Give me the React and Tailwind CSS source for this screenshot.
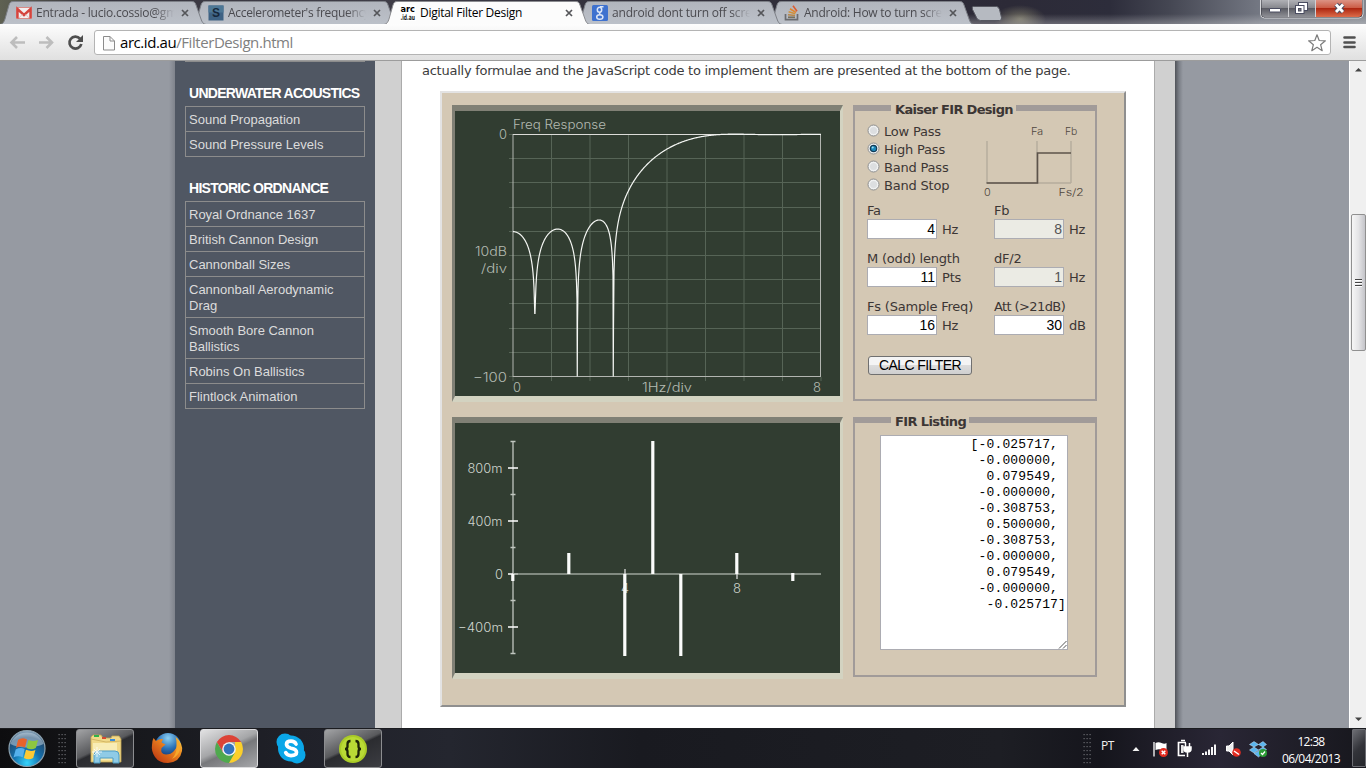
import React from "react";

const UI = "font-['Open_Sans','Noto_Sans',sans-serif]";

const TAB = "M0 24.5 C3 24 4 22 5 19 L9 5 C10 2 11 1.5 14 1.5 H191 C194 1.5 195 2 196 5 L201 19 C202 22 203 24 206 24.5";

function Tab({ icon, title, active, spacing }) {
  return (
    <div className="flex h-6 w-48 shrink-0 items-center pt-0.5 pl-4">
      <div className="h-4 w-4 shrink-0">{icon}</div>
      <div
        className={`ml-1 w-[138px] shrink-0 overflow-hidden text-[12px] leading-4 whitespace-nowrap ${spacing} ${
          active ? "text-black" : "text-[#4b4b50] [mask-image:linear-gradient(90deg,black_86%,transparent)]"
        }`}
      >
        {title}
      </div>
      <svg className="ml-[7px] shrink-0" width="8" height="8" viewBox="0 0 8 8">
        <path d="M1 1 7 7M7 1 1 7" stroke="#55565a" strokeWidth="1.7" />
      </svg>
    </div>
  );
}

const Gmail = (
  <svg width="16" height="16" viewBox="0 0 16 16">
    <rect x="0.5" y="2.5" width="15" height="11" rx="1" fill="#f3eeee" stroke="#d98a86" />
    <path d="M1.5 13.5V4L8 10l6.500-6V13.500" fill="none" stroke="#d5443d" strokeWidth="2.400" />
    <path d="M3 13 6.500 9M13 13 9.500 9" stroke="#ddb9b7" strokeWidth="0.800" />
  </svg>
);
const SBlue = (
  <svg width="16" height="16" viewBox="0 0 16 16">
    <rect width="15" height="15" x="0.500" y="0.500" fill="#3e6284" />
    <rect width="15" height="7" x="0.500" y="0.500" fill="#4d7795" />
    <text x="8" y="12" textAnchor="middle" fontSize="12" fontWeight="700" fontFamily="Liberation Sans, sans-serif" fill="#16283c">S</text>
  </svg>
);
const Arc = (
  <svg width="16" height="16" viewBox="0 0 16 16">
    <rect width="16" height="16" fill="#fff" />
    <text x="0.500" y="7" fontSize="9" fontWeight="700" textLength="14.500" lengthAdjust="spacingAndGlyphs" fontFamily="DejaVu Sans, sans-serif" fill="#000">arc</text>
    <text x="0.500" y="15" fontSize="7.500" fontWeight="700" textLength="14.500" lengthAdjust="spacingAndGlyphs" fontFamily="DejaVu Sans, sans-serif" fill="#222">.id.au</text>
  </svg>
);
const Google = (
  <svg width="16" height="16" viewBox="0 0 16 16">
    <rect width="16" height="16" rx="1.500" fill="#3f72cf" />
    <g fill="none" stroke="#dce6f7" strokeWidth="1.500">
      <ellipse cx="7.500" cy="4.800" rx="2.200" ry="2.500" />
      <path d="M8 1.800h3.500M8.500 7.200c-1.500 1-1 1.700 0 2.300" />
      <ellipse cx="7.800" cy="12" rx="3.100" ry="2.300" />
    </g>
  </svg>
);
const Stack = (
  <svg width="16" height="16" viewBox="0 0 16 16">
    <path d="M1.500 9v5.700h12V9" fill="none" stroke="#6b6c70" strokeWidth="1.700" />
    <path d="M4 12.300h7" stroke="#77705f" strokeWidth="1.700" />
    <path d="M4 9.700l7 .8" stroke="#b9874a" strokeWidth="1.600" />
    <path d="M4.600 6.800l6.700 2" stroke="#d0903a" strokeWidth="1.600" />
    <path d="M6 3.800l6 3.700" stroke="#df8630" strokeWidth="1.600" />
    <path d="M9 .8l4 5.500" stroke="#dc5c30" strokeWidth="1.600" />
  </svg>
);

function TabStrip() {
  return (
    <div className="relative h-6 w-full overflow-hidden bg-[linear-gradient(90deg,#5f6152_0px,#37353f_90px,#3f3d47_380px,#33313c_620px,#2c2a37_1010px,#2d2d3b_1110px,#454753_1170px,#747883_1260px,#82868e_1366px)]">
      <svg className="absolute inset-0" width="1366" height="25">
        <defs>
          <linearGradient id="tabg" x1="0" y1="0" x2="0" y2="1">
            <stop offset="0" stopColor="#b1b5bd" />
            <stop offset="1" stopColor="#bcc1c9" />
          </linearGradient>
          <linearGradient id="band" x1="0" y1="0" x2="0" y2="1">
            <stop offset="0" stopColor="#fff" stopOpacity="0" />
            <stop offset="1" stopColor="#fff" stopOpacity="0.280" />
          </linearGradient>
          <radialGradient id="olive">
            <stop offset="0" stopColor="#85826e" stopOpacity="0.800" />
            <stop offset="1" stopColor="#85826e" stopOpacity="0" />
          </radialGradient>
        </defs>
        <ellipse cx="1020" cy="19" rx="26" ry="14" fill="url(#olive)" />
        <rect x="965" y="14" width="401" height="10" fill="url(#band)" />
        {[768, 576, 192, 0].map((x) => (
          <path key={x} d={TAB} transform={`translate(${x} 0)`} fill="url(#tabg)" stroke="#7d8087" />
        ))}
        <path d={TAB} transform="translate(384 0)" fill="#fcfcfc" stroke="#8b8c90" />
        <path d="M973.500 6.500h23q2 0 3 3l2 8q.5 3-2 3h-19q-3 0-4-3l-4-8q-1-3 1-3z" fill="#b6bac1" stroke="#55565f" />
      </svg>
      <div className={`relative flex justify-between ${UI}`}>
        <div className="flex">
          <Tab icon={Gmail} title="Entrada - lucio.cossio@gmail" spacing="tracking-[-0.22px]" />
          <Tab icon={SBlue} title="Accelerometer's frequency" spacing="tracking-[-0.3px]" />
          <Tab icon={Arc} title="Digital Filter Design" active spacing="tracking-[-0.27px]" />
          <Tab icon={Google} title="android dont turn off screen" spacing="tracking-[-0.2px]" />
          <Tab icon={Stack} title="Android: How to turn screen" spacing="tracking-[-0.25px]" />
        </div>
        <svg className="mr-px" width="105" height="20" viewBox="0 0 105 20">
          <defs>
            <linearGradient id="wb" x1="0" y1="0" x2="0" y2="1">
              <stop offset="0" stopColor="#b0b1b6" />
              <stop offset="0.480" stopColor="#85868c" />
              <stop offset="0.500" stopColor="#5b5c64" />
              <stop offset="1" stopColor="#8f9096" />
            </linearGradient>
            <linearGradient id="wr" x1="0" y1="0" x2="0" y2="1">
              <stop offset="0" stopColor="#dc9384" />
              <stop offset="0.480" stopColor="#cb5a43" />
              <stop offset="0.500" stopColor="#ae2711" />
              <stop offset="1" stopColor="#dc6c4a" />
            </linearGradient>
          </defs>
          <path d="M0.500-1V14q0 4 4 4H99q4 0 4-4V-1z" fill="#35363f" stroke="#d8d9dc" />
          <path d="M1.500 0V13q0 4 3 4H28V0z" fill="url(#wb)" />
          <rect x="29" width="26" height="17" fill="url(#wb)" />
          <path d="M56 0V17H98q4 0 4-4V0z" fill="url(#wr)" />
          <path d="M28.500 0V17M55.500 0V17" stroke="#d0d0d4" />
          <rect x="9.500" y="8.500" width="11" height="3.500" rx="0.500" fill="#fff" stroke="#4a4d61" />
          <rect x="38.500" y="2.500" width="9" height="8" fill="#fff" stroke="#4a4d61" />
          <rect x="35.500" y="5.500" width="8.500" height="8" fill="#fff" stroke="#4a4d61" />
          <rect x="38.500" y="8.500" width="2.500" height="2.500" fill="#777" stroke="#4a4d61" />
          <path d="M76 4.500l7 7.500M83 4.500l-7 7.500" stroke="#4a4d61" strokeWidth="4.800" />
          <path d="M76 4.500l7 7.500M83 4.500l-7 7.500" stroke="#fff" strokeWidth="2.800" />
        </svg>
      </div>
    </div>
  );
}

function Toolbar() {
  return (
    <div className="flex h-[37px] w-full items-start border-b border-[#9c9c9c] bg-[linear-gradient(#fdfdfd,#f1f1f1_40%,#e0e0e0)] pt-1.5">
      <svg className="mt-0 shrink-0" width="94" height="26" viewBox="0 0 94 26">
        <g fill="none" stroke="#bdbdbd" strokeWidth="2.600">
          <path d="M11.500 12.500H25M17 7l-5.500 5.500L17 18" />
          <path d="M39 12.500H52M46.500 7l5.500 5.500L46.500 18" />
        </g>
        <path d="M80 8.700A6 6 0 1 0 81.300 14" fill="none" stroke="#4e4e4e" strokeWidth="2.700" />
        <path d="M83 5v7h-7z" fill="#4e4e4e" />
      </svg>
      <div className={`flex h-[25px] w-[1237px] items-center rounded-[3px] border border-[#b4b4b4] bg-white pl-2 ${UI}`}>
        <svg width="12" height="16" viewBox="0 0 12 16">
          <path d="M0.500 1.500H7L11.500 6V15H0.500zM7 1.500V6H11.500" fill="#fbfbfb" stroke="#8b8b8b" />
        </svg>
        <div className="mb-px ml-[5px] text-[15px] leading-5 tracking-[-0.43px] text-[#808080]">
          <span className="text-black">arc.id.au</span>/FilterDesign.html
        </div>
        <svg className="mr-[3px] ml-auto" width="20" height="20" viewBox="0 0 20 20">
          <path d="M10 1.800l2.200 5.700 6.200.3-4.800 3.900 1.600 6L10 14.300 4.800 17.700l1.600-6L1.600 7.800l6.200-.3z" fill="#fff" stroke="#7c7c7c" strokeWidth="1.200" strokeLinejoin="round" />
        </svg>
      </div>
      <svg className="mt-[5px] ml-3" width="14" height="14" viewBox="0 0 14 14">
        <path d="M1.500 2.500h10M1.500 7.500h10M1.500 12h10" stroke="#505050" strokeWidth="2.600" strokeLinecap="round" />
      </svg>
    </div>
  );
}

function MenuList({ items }) {
  return (
    <ul className="w-[180px] border border-b-0 border-[#8c8c8c]">
      {items.map((t) => (
        <li key={t} className="border-b border-[#8c8c8c] pt-[5px] pr-5 pb-[3px] pl-[3px] text-[13px] leading-4 text-[#dcdcdc]">
          {t}
        </li>
      ))}
    </ul>
  );
}

function Heading({ children }) {
  return <h3 className="mt-[23px] mb-[5px] pl-1 text-[14px] leading-4 font-bold tracking-[-0.72px] whitespace-nowrap text-white">{children}</h3>;
}

function Sidebar() {
  return (
    <div className="w-[200px] shrink-0 bg-[#505763] pl-2.5 font-['Liberation_Sans',sans-serif]">
      <div className="h-px w-[180px] bg-[#8c8c8c]" />
      <Heading>UNDERWATER ACOUSTICS</Heading>
      <MenuList items={["Sound Propagation", "Sound Pressure Levels"]} />
      <Heading>HISTORIC ORDNANCE</Heading>
      <MenuList
        items={[
          "Royal Ordnance 1637",
          "British Cannon Design",
          "Cannonball Sizes",
          "Cannonball Aerodynamic Drag",
          "Smooth Bore Cannon Ballistics",
          "Robins On Ballistics",
          "Flintlock Animation",
        ]}
      />
    </div>
  );
}

/* Magnitude of the 11 tap high pass filter, plotted in canvas coordinates. */
function responsePath() {
  const amp = (x) => {
    const w = ((x - 58) / 308) * Math.PI;
    return 0.5 + 2 * (-0.308753 * Math.cos(w) + 0.079549 * Math.cos(3 * w) - 0.025717 * Math.cos(5 * w));
  };
  const pts = [];
  let prev = amp(58);
  for (let x = 58; x <= 366; x += 0.5) {
    const a = amp(x);
    if (a * prev < 0) pts.push([x - 0.25, x < 100 ? 202.5 : 265.5]);
    prev = a;
    const y = 23.5 - 2.42 * 20 * Math.log10(Math.abs(a) + 1e-9);
    pts.push([x, Math.min(y, x < 100 ? 202.5 : 265.5)]);
  }
  return pts.map((p, i) => `${i ? "L" : "M"}${p[0].toFixed(2)} ${p[1].toFixed(2)}`).join("");
}

function Label({ x, y, w, children, size = 12.5, fill = "#b4bbb2" }) {
  return (
    <text x={x} y={y} textLength={w} lengthAdjust="spacingAndGlyphs" fontSize={size} fill={fill} fontFamily="Inter, sans-serif" fontWeight="300">
      {children}
    </text>
  );
}

const BEZEL = "border-x-[3px] border-y-[6px] border-t-[#808075] border-r-[#d3d3c1] border-b-[#d3d3c1] border-l-[#808075] bg-[#313d31]";

function FreqPlot() {
  return (
    <div className={`h-[297px] w-[391px] ${BEZEL}`}>
      <svg width="385" height="285" viewBox="0 0 385 285">
        <g stroke="#566456" fill="none">
          {[1, 2, 3, 4, 5, 6, 7].map((i) => (
            <path key={i} d={`M${58 + i * 38.5} 24V270`} />
          ))}
          {[0, 1, 2, 3, 4, 5, 6, 7, 8, 9, 10].map((i) => (
            <path key={i} d={`M54 ${23.5 + Math.round(i * 24.2)}H366`} />
          ))}
          <path d="M58 266V270M366 266V270" />
        </g>
        <rect x="58" y="23.5" width="307.5" height="242" fill="none" stroke="#b2b5b0" />
        <path d="M58 23.500H366" stroke="#dcdcd8" />
        <path d={responsePath()} fill="none" stroke="#f4f6f3" strokeWidth="1.200" />
        <Label x="58" y="18" w="93">Freq Response</Label>
        <Label x="44" y="28" w="8">0</Label>
        <Label x="20" y="145" w="32">10dB</Label>
        <Label x="26" y="162" w="26">/div</Label>
        <Label x="18" y="270.5" w="34">−100</Label>
        <Label x="58" y="281" w="8">0</Label>
        <Label x="187" y="281" w="50">1Hz/div</Label>
        <Label x="358" y="281" w="8">8</Label>
      </svg>
    </div>
  );
}

const BARS = [
  [58, 151, 158],
  [114, 130, 151],
  [170, 151, 233],
  [198, 18, 151],
  [226, 151, 233],
  [282, 130, 151],
  [338, 150, 158],
];

function ImpulsePlot() {
  return (
    <div className={`h-[262px] w-[391px] ${BEZEL}`}>
      <svg width="385" height="250" viewBox="0 0 385 250">
        <path d="M58 18V231M55.500 18.500h5M55.500 71.500h5M55.500 124.500h5M55.500 177.500h5M55.500 230.500h5" stroke="#c0c6bf" strokeWidth="1.300" fill="none" />
        <path d="M53 45h10M53 98h10M53 151h10M53 204h10" stroke="#fff" strokeWidth="1.500" />
        <path d="M58 151H366" stroke="#9ca59b" strokeWidth="1.700" />
        <path d="M170 146V151M282 151V156" stroke="#e8e8e8" strokeWidth="1.200" />
        <Label x="12.500" y="49.500" w="35" fill="#cfd5ce">800m</Label>
        <Label x="12.500" y="102.500" w="35" fill="#cfd5ce">400m</Label>
        <Label x="40" y="155.500" w="8" fill="#cfd5ce">0</Label>
        <Label x="3" y="208.500" w="45" fill="#cfd5ce">−400m</Label>
        <Label x="166" y="169.500" w="8" fill="#cfd5ce">4</Label>
        <Label x="278" y="169.500" w="8" fill="#cfd5ce">8</Label>
        {BARS.map(([x, a, b]) => (
          <rect key={x} x={x - 1.8} y={a} width="3.2" height={b - a} fill="#fbfcfb" />
        ))}
      </svg>
    </div>
  );
}

function Radio({ label, on }) {
  return (
    <div className="flex h-[18px] items-center">
      <svg className="mb-[3px]" width="13" height="13" viewBox="0 0 13 13">
        <circle cx="6.500" cy="6.500" r="5.500" fill="#f0f1f1" stroke="#8e8f8f" />
        {on ? <circle cx="6.500" cy="6.500" r="3.200" fill="#1b86b8" stroke="#123a55" strokeWidth="1.200" /> : <circle cx="6.500" cy="6.500" r="3.500" fill="#dcdee0" />}
        {on && <circle cx="5.700" cy="5.500" r="1" fill="#9fe0f6" />}
      </svg>
      <span className="ml-1">{label}</span>
    </div>
  );
}

function Field({ label, value, unit, off }) {
  return (
    <div className="h-12">
      <div className="h-4 leading-4 whitespace-nowrap">{label}</div>
      <div className="flex items-center">
        <div
          className={`h-5 w-[70px] border border-[#acacb2] pr-px text-right font-['Liberation_Sans',sans-serif] text-[14px] leading-[18px] tracking-normal ${
            off ? "bg-[#ebebe4] text-[#545454]" : "bg-white text-black"
          }`}
        >
          {value}
        </div>
        <span className="mt-px ml-[5px]">{unit}</span>
      </div>
    </div>
  );
}

function Panel({ title, gap, height, children }) {
  return (
    <div className={`relative w-[244px] border-2 border-t-[6px] border-[#a19b99] ${height}`}>
      <div className={`absolute -top-[6px] left-9 h-[13px] bg-[#d4c8b4] pl-1 text-[13px] leading-[10px] font-bold whitespace-nowrap ${gap}`}>{title}</div>
      {children}
    </div>
  );
}

function BandSketch() {
  return (
    <svg className="shrink-0" width="116" height="80" viewBox="0 0 116 80">
      <path d="M13 21V63M63 21V63M97 21V63M13 63H97" stroke="#b5ac9c" strokeWidth="1.400" fill="none" />
      <path d="M12.500 63H63.500V33H97" stroke="#5c534a" strokeWidth="1.600" fill="none" />
      <Label x="57" y="15" w="12" size={10} fill="#4f473e">Fa</Label>
      <Label x="91" y="15" w="12" size={10} fill="#4f473e">Fb</Label>
      <Label x="10" y="76" w="6.500" size={10} fill="#4f473e">0</Label>
      <Label x="84.500" y="76" w="25" size={10} fill="#4f473e">Fs/2</Label>
    </svg>
  );
}

const LISTING = [
  "[-0.025717, ",
  "-0.000000, ",
  "0.079549, ",
  "-0.000000, ",
  "-0.308753, ",
  "0.500000, ",
  "-0.308753, ",
  "-0.000000, ",
  "0.079549, ",
  "-0.000000, ",
  "-0.025717]",
];

function Designer() {
  return (
    <div className="ml-[38px] flex h-[616px] w-[686px] gap-2.5 border-2 border-t-[#e3e3e3] border-r-[#8f8f8f] border-b-[#8f8f8f] border-l-[#e3e3e3] bg-[#d4c8b4] pt-3 pl-2.5 text-[#3c3634]">
      <div className="flex flex-col gap-[15px]">
        <FreqPlot />
        <ImpulsePlot />
      </div>
      <div className="flex flex-col gap-4 text-[13px] tracking-[-0.2px]">
        <Panel title="Kaiser FIR Design" gap="w-[125px] tracking-[-0.68px]" height="h-[296px]">
          <div className="flex pt-3 pl-3">
            <div className="w-[107px] shrink-0 leading-[18px] whitespace-nowrap">
              <Radio label="Low Pass" />
              <Radio label="High Pass" on />
              <Radio label="Band Pass" />
              <Radio label="Band Stop" />
            </div>
            <div className="-mt-[3px] h-[79px]">
              <BandSketch />
            </div>
          </div>
          <div className="grid grid-cols-[127px_100px] pt-1 pl-3">
            <Field label="Fa" value="4" unit="Hz" />
            <Field label="Fb" value="8" unit="Hz" off />
            <Field label="M (odd) length" value="11" unit="Pts" />
            <Field label="dF/2" value="1" unit="Hz" off />
            <Field label="Fs (Sample Freq)" value="16" unit="Hz" />
            <Field label={<span className="tracking-[-0.6px]">{"Att (>21dB)"}</span>} value="30" unit="dB" />
          </div>
          <div className="mt-[9px] ml-[13px] h-[19px] w-[104px] rounded-[3px] border border-[#707070] bg-[linear-gradient(#f4f4f4_45%,#dcdcdc_50%,#cfcfcf)] text-center font-['Liberation_Sans',sans-serif] text-[14px] leading-[17px] tracking-[-0.6px] text-black">
            CALC FILTER
          </div>
        </Panel>
        <Panel title="FIR Listing" gap="w-[78px] tracking-[-0.62px]" height="h-[260px]">
          <div className="relative mt-3 ml-[25px] h-[215px] w-[188px] border border-[#acacb2] bg-white pt-px pr-px text-right font-['Liberation_Mono',monospace] text-[13px] leading-4 tracking-[0.15px] text-black">
            {LISTING.map((l, i) => (
              <div key={i} className="whitespace-pre">
                {l}
              </div>
            ))}
            <svg className="absolute right-0 bottom-0" width="9" height="9" viewBox="0 0 9 9">
              <path d="M1 8.500 8.500 1M5 8.500 8.500 5" stroke="#555" />
            </svg>
          </div>
        </Panel>
      </div>
    </div>
  );
}

function Scrollbar() {
  return (
    <div className="flex w-[17px] shrink-0 flex-col items-center border-l border-white bg-[#f0f0f0]">
      <svg className="shrink-0" width="16" height="17" viewBox="0 0 16 17">
        <path d="M5 10.500 8.500 7l3.500 3.500z" fill="#444" />
      </svg>
      <div className="mt-[136px] flex h-[137px] w-[15px] shrink-0 flex-col items-center justify-center rounded-[2px] border border-[#909090] bg-[linear-gradient(90deg,#f6f6f6,#e4e4e6_50%,#c4c4c9)]">
        <div className="h-[2px] w-[7px] border-b border-white bg-[#444]" />
        <div className="mt-px h-[2px] w-[7px] border-b border-white bg-[#444]" />
        <div className="mt-px h-[2px] w-[7px] border-b border-white bg-[#444]" />
      </div>
      <svg className="mt-auto shrink-0" width="16" height="17" viewBox="0 0 16 17">
        <path d="M5 6.500 8.500 10l3.500-3.500z" fill="#444" />
      </svg>
    </div>
  );
}

function TaskButton({ children, look }) {
  return <div className={`flex h-[39px] w-[58px] items-center justify-center rounded-[3px] border ${look}`}>{children}</div>;
}

const LIT = "border-[#8c8d90] bg-[linear-gradient(155deg,#a2a3a5,#58595c_45%,#2b2c30_50%,#3c3d42)]";
const BRIGHT = "border-[#dcdcde] bg-[linear-gradient(155deg,#e2e2e3,#a5a6a8_45%,#77787b_55%,#a6a7aa)]";

function Grip() {
  return (
    <svg width="8" height="32" viewBox="0 0 8 32">
      {[1, 5, 9, 13, 17, 21, 25, 29].map((y) =>
        [0.5, 3.5, 6.5].map((x) => <rect key={x + "-" + y} x={x} y={y} width="1.200" height="1.200" fill="#6a6b70" />)
      )}
    </svg>
  );
}

function Taskbar() {
  return (
    <div className={`relative flex h-10 w-full items-start border-t border-[#1b1c20] bg-[linear-gradient(90deg,#0d0d0f,#17181c_130px,#202129_300px,#24262f_450px,#191a20_640px,#1d1e24_1000px,#15151c_1100px,#292635_1220px,#17171d_1366px)] ${UI}`}>
      <svg className="shrink-0" width="55" height="39" viewBox="0 0 55 39">
        <defs>
          <radialGradient id="orb" cx="0.500" cy="0.900" r="0.950">
            <stop offset="0" stopColor="#35d4fb" />
            <stop offset="0.400" stopColor="#1370ae" />
            <stop offset="0.750" stopColor="#224b70" />
            <stop offset="1" stopColor="#b8cddd" />
          </radialGradient>
        </defs>
        <circle cx="27" cy="19.500" r="18" fill="url(#orb)" stroke="#8aa0ae" strokeWidth="1.200" />
        <path d="M10.500 15a17 15 0 0 1 33 0c-8 4-25 5-33 0" fill="#d6e3ee" opacity="0.480" />
        <path d="M18 11q4-3 9-.5l-2 8q-5-2-9 .5z" fill="#e8632b" />
        <path d="M28.500 11q5 2 9.500 0l-2.200 8q-4.500 2.500-9.300 0z" fill="#8ec63f" />
        <path d="M15.700 20.500q4.500-2.500 9-.500l-2 8.200q-5-2.200-9.200.300z" fill="#55b0ec" />
        <path d="M26 20.800q5 2.200 9.400.200l-2.200 8q-4.500 2.500-9.300 0z" fill="#fcc934" />
      </svg>
      <div className="ml-[3px] pt-1">
        <Grip />
      </div>
      <div className="ml-[10px] flex">
        <TaskButton look={LIT}>
          <svg width="34" height="32" viewBox="0 0 34 32">
            <path d="M3 29V4l2-2h8l2 3h8l1-2h7l2 3v23z" fill="#f0d98a" stroke="#c3a452" strokeWidth="0.800" />
            <path d="M5 10h24v17H5z" fill="#f8ecb5" />
            <path d="M6 2h5v2H6z" fill="#2eb24a" />
            <path d="M14 4h4v2h-4z" fill="#d54b32" />
            <path d="M22 6h5v2h-5z" fill="#3a8ddb" />
            <path d="M3 6l15 3 15-1" fill="none" stroke="#d3b663" />
            <path d="M6 30V22q0-4 4-4h17q4 0 4 4v8h-6v-5H12v5z" fill="#8fcbe6" stroke="#4e9dc4" strokeWidth="1" />
            <path d="M9 14v10M4 19h10M6 16l6 6M12 16l-6 6" stroke="#fff" strokeWidth="0.900" opacity="0.850" />
          </svg>
        </TaskButton>
        <TaskButton look="mx-1 border-transparent">
          <svg className="mb-0.5" width="32" height="32" viewBox="0 0 32 32">
            <defs>
              <radialGradient id="ffb" cx="0.500" cy="0.200" r="0.800">
                <stop offset="0" stopColor="#8cd0f2" />
                <stop offset="0.500" stopColor="#2b72b8" />
                <stop offset="1" stopColor="#112a63" />
              </radialGradient>
              <linearGradient id="ffo" x1="1" y1="0" x2="0" y2="1">
                <stop offset="0" stopColor="#f8d34a" />
                <stop offset="0.350" stopColor="#ef8a20" />
                <stop offset="1" stopColor="#b52a10" />
              </linearGradient>
            </defs>
            <circle cx="17" cy="14" r="13" fill="url(#ffb)" />
            <path d="M26 6q6 6 5 13-2 11-14 12-9 0-13-6-4-6-3-12 0-4 1.500-7l2.500 3q3-2.500 7-2l-1.500 3.500 4 2-4 3.500q-1.500 6 4.500 6.500 5 0 8-3.500Q28 14 26 6z" fill="url(#ffo)" />
            <path d="M24.500 4.500q6 6 4.500 13-2 7-8 9.500 5-6 4.500-12Q26 9 24.500 4.500z" fill="#f6a82c" />
          </svg>
        </TaskButton>
        <TaskButton look={BRIGHT}>
          <svg width="30" height="30" viewBox="0 0 30 30">
            <path d="M2.900 8A14 14 0 0 0 15 29L21.500 18.500 8.900 18.500z" fill="#4fa94e" />
            <path d="M27.100 8A14 14 0 0 1 15 29l6-10.500V8z" fill="#fbcf2b" />
            <path d="M15 8h12.100A14 14 0 0 0 2.900 8l6 10z" fill="#dc4337" />
            <circle cx="15" cy="15" r="6.800" fill="#f2f3f4" />
            <circle cx="15" cy="15" r="5.400" fill="#3472bd" />
          </svg>
        </TaskButton>
        <TaskButton look="mx-1 border-transparent">
          <svg width="30" height="31" viewBox="0 0 30 31">
            <circle cx="9" cy="9" r="8.500" fill="#0ba7e8" />
            <circle cx="21" cy="22" r="8.500" fill="#0ba7e8" />
            <circle cx="15" cy="15.500" r="13" fill="#0ba7e8" />
            <path d="M20 11Q18.500 8.200 15 8.200q-4.500 0-4.500 3.100 0 2.900 4.500 3.900 5.500 1 5.500 4.100 0 3.300-5.500 3.300-4 0-5.300-3" fill="none" stroke="#fff" strokeWidth="3.700" strokeLinecap="round" />
          </svg>
        </TaskButton>
        <TaskButton look={LIT}>
          <svg width="30" height="30" viewBox="0 0 30 30">
            <circle cx="15" cy="15" r="14" fill="#aacb27" />
            <circle cx="15" cy="15" r="12" fill="#b9da35" />
            <path d="M12.500 7q-3 0-3 3v2.500q0 2.500-2.500 2.500 2.500 0 2.500 2.500V20q0 3 3 3M17.500 7q3 0 3 3v2.500q0 2.500 2.500 2.500-2.500 0-2.500 2.500V20q0 3-3 3" fill="none" stroke="#1e2408" strokeWidth="2.300" />
          </svg>
        </TaskButton>
      </div>
      <div className="ml-auto flex">
        <div className="pt-1">
          <Grip />
        </div>
        <div className="mt-[9px] ml-[10px] w-[31px] text-[12px] leading-4 text-[#f0f0f0]">
          <span className="tracking-[-0.4px]">PT</span>
        </div>
        <svg width="136" height="39" viewBox="0 0 136 39">
          <path d="M0.500 22 4 18 7.500 22z" fill="#f2f2f2" />
          <path d="M22 13V27.500" stroke="#fff" strokeWidth="1.300" />
          <path d="M23.500 14q3-1.500 6 0t5 0v7q-3 1.500-5 0t-6 0z" fill="#fff" />
          <circle cx="31.500" cy="23.500" r="4.500" fill="#e02b20" />
          <path d="M29.700 21.700l3.600 3.600M33.300 21.700l-3.600 3.600" stroke="#fff" strokeWidth="1.500" />
          <path d="M54 13.500H46.500V26.500H53M49 11.500h4" fill="none" stroke="#fff" strokeWidth="1.700" />
          <path d="M49 16h2.500v8H49z" fill="#e5e5e5" />
          <path d="M52 18h7v2q0 3-3.500 3t-3.500-3zM53.500 14v4M57.500 14v4M55.500 23v5" fill="#fff" stroke="#fff" strokeWidth="1.500" />
          <path d="M71 24v2M74 22.500v3.500M77 20.500v5.500M80 18V26M83 15.500v10.500" stroke="#fff" strokeWidth="1.900" />
          <path d="M94.500 17h2.500l4-4V26l-4-4h-2.500z" fill="#eee" stroke="#fff" />
          <circle cx="104.500" cy="23.500" r="4.300" fill="#e02b20" />
          <path d="M102 22l5 3.500" stroke="#fff" strokeWidth="1.500" />
          <path d="M122 12.500 126.500 15.500 122 18 117.500 15.500zM131 12.500 126.500 15.500 131 18 134.500 15.500zM122 18l4.500 3-4.500 3-4.500-3zM131 18l-4.500 3 4.500 2 3.500-2.500zM122 24.500l4.500-2.500 4.500 2-4.500 4z" fill="#5bb5ee" stroke="#c7e7fb" strokeWidth="0.500" />
          <circle cx="131" cy="24" r="4" fill="#2b9b35" />
          <path d="M129 24l1.500 1.500 2.500-3" stroke="#fff" strokeWidth="1.200" fill="none" />
        </svg>
        <div className="mt-1 ml-[13px] w-[60px] text-center text-[12px] leading-[17px] whitespace-nowrap text-white">
          <div className="tracking-[-0.7px]">12:38</div>
          <div className="tracking-[-0.55px]">06/04/2013</div>
        </div>
        <div className="ml-[11px] h-[38px] w-[14px] rounded-[1px] border border-[#6c6d73] bg-[linear-gradient(135deg,#6d6e74,#33343a_50%,#25262b)]" />
      </div>
    </div>
  );
}

export default function App() {
  return (
    <div className="flex h-[768px] w-[1366px] flex-col overflow-hidden">
      <TabStrip />
      <Toolbar />
      <div className="flex h-[667px] w-full bg-[#969aa2]">
        <div className="w-[175px] shrink-0 bg-[linear-gradient(90deg,transparent_169px,#7f838c)]" />
        <Sidebar />
        <div className="flex w-[800px] shrink-0 bg-[#d0d0d0] font-['DejaVu_Sans',sans-serif]">
          <div className="ml-[26px] w-[754px] border-x border-[#ababab] bg-white">
            <p className="h-[30px] pl-5 text-[13px] leading-[19px] tracking-[-0.25px] whitespace-nowrap text-[#3c3c3c]">
              actually formulae and the JavaScript code to implement them are presented at the bottom of the page.
            </p>
            <Designer />
          </div>
        </div>
        <div className="w-[174px] shrink-0 bg-[linear-gradient(90deg,#505359,#7b7f87_4px,transparent_8px)]" />
        <Scrollbar />
      </div>
      <Taskbar />
    </div>
  );
}
